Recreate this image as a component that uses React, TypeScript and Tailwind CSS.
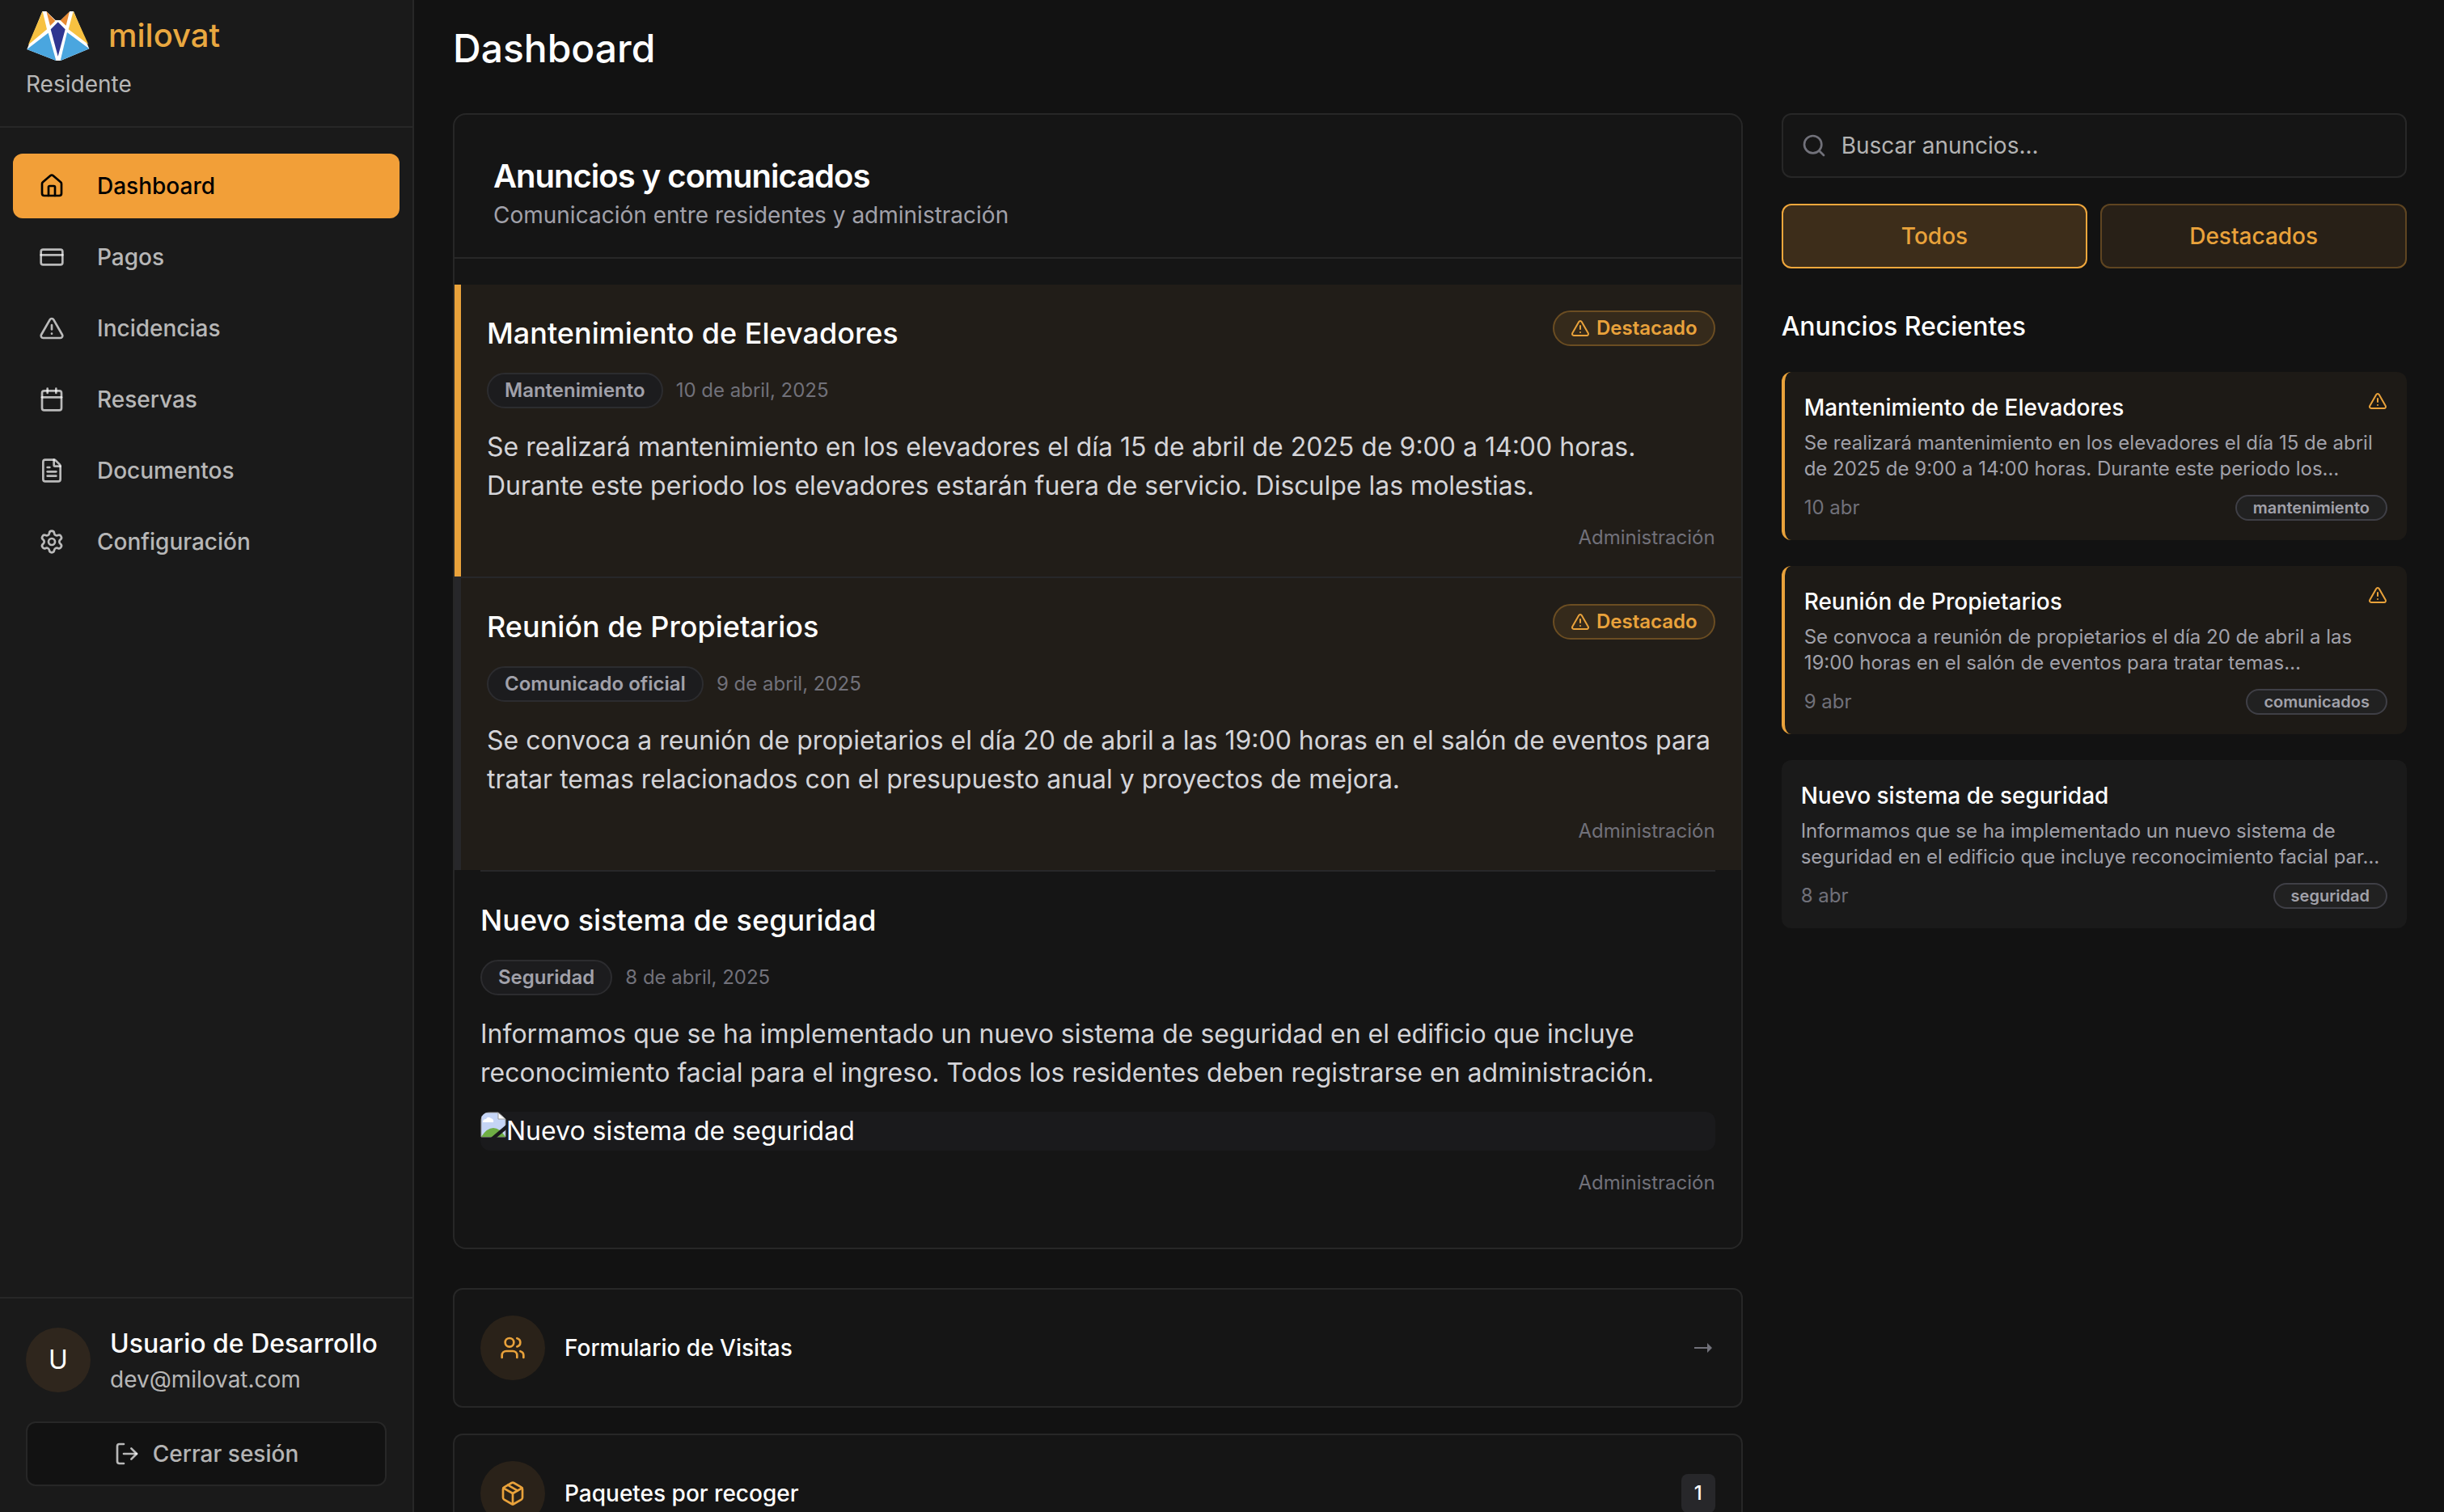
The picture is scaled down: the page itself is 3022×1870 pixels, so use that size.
import {
  Calendar,
  CreditCard,
  FileText,
  House,
  LogOut,
  Package,
  Search,
  Settings,
  TriangleAlert,
  Users,
  type LucideIcon,
} from "lucide-react";
import type { ReactNode } from "react";

type NavItem = { label: string; icon: LucideIcon; active?: boolean };

const navItems: NavItem[] = [
  { label: "Dashboard", icon: House, active: true },
  { label: "Pagos", icon: CreditCard },
  { label: "Incidencias", icon: TriangleAlert },
  { label: "Reservas", icon: Calendar },
  { label: "Documentos", icon: FileText },
  { label: "Configuración", icon: Settings },
];

type Announcement = {
  title: string;
  category: string;
  tag: string;
  date: string;
  shortDate: string;
  body: string;
  excerpt: string;
  featured: boolean;
  imageAlt?: string;
};

const announcements: Announcement[] = [
  {
    title: "Mantenimiento de Elevadores",
    category: "Mantenimiento",
    tag: "mantenimiento",
    date: "10 de abril, 2025",
    shortDate: "10 abr",
    body: "Se realizará mantenimiento en los elevadores el día 15 de abril de 2025 de 9:00 a 14:00 horas. Durante este periodo los elevadores estarán fuera de servicio. Disculpe las molestias.",
    excerpt:
      "Se realizará mantenimiento en los elevadores el día 15 de abril de 2025 de 9:00 a 14:00 horas. Durante este periodo los…",
    featured: true,
  },
  {
    title: "Reunión de Propietarios",
    category: "Comunicado oficial",
    tag: "comunicados",
    date: "9 de abril, 2025",
    shortDate: "9 abr",
    body: "Se convoca a reunión de propietarios el día 20 de abril a las 19:00 horas en el salón de eventos para tratar temas relacionados con el presupuesto anual y proyectos de mejora.",
    excerpt:
      "Se convoca a reunión de propietarios el día 20 de abril a las 19:00 horas en el salón de eventos para tratar temas…",
    featured: true,
  },
  {
    title: "Nuevo sistema de seguridad",
    category: "Seguridad",
    tag: "seguridad",
    date: "8 de abril, 2025",
    shortDate: "8 abr",
    body: "Informamos que se ha implementado un nuevo sistema de seguridad en el edificio que incluye reconocimiento facial para el ingreso. Todos los residentes deben registrarse en administración.",
    excerpt:
      "Informamos que se ha implementado un nuevo sistema de seguridad en el edificio que incluye reconocimiento facial par…",
    featured: false,
    imageAlt: "Nuevo sistema de seguridad",
  },
];

function Logo() {
  return (
    <svg viewBox="0 0 240 240" className="size-20 shrink-0" aria-hidden="true">
      <path d="M61 30 L77 30 L110 62 L129 62 L163 30 L177 30 L235 169 L129 213 L112 213 L4 171 Z" fill="#fff" />
      <path d="M62 30 L8 155 L78 97 Z" fill="#f7c141" />
      <path d="M176 30 L232 153 L158 97 Z" fill="#f7c141" />
      <path d="M76 30 L90 84 L109 65 Z" fill="#e78a33" />
      <path d="M162 30 L128 64 L149 83 Z" fill="#e78a33" />
      <path d="M119 70 L146 97 L119 197 L92 97 Z" fill="#2f3590" />
      <path d="M83 110 L4 171 L112 213 Z" fill="#4aa6df" />
      <path d="M153 108 L235 169 L128 213 Z" fill="#4aa6df" />
      <path d="M77 30 L110 62 L129 62 L162 30 Z" fill="#1a1a1a" />
    </svg>
  );
}

function BrokenImage() {
  return (
    <svg viewBox="0 0 32 32" className="size-8 shrink-0" aria-hidden="true">
      <path d="M1 1 H22 L31 9 V31 H1 Z" fill="#c5d5f6" stroke="#9a9a9a" />
      <path d="M22 1 L31 9 H22 Z" fill="#fff" stroke="#9a9a9a" />
      <path d="M3 13 Q3 9 7 9 Q9 5 13 8 Q17 9 16 13 Z" fill="#fff" />
      <path d="M1 31 Q8 20 16 20 Q24 20 31 31 Z" fill="#6fae45" />
      <path d="M13 32 L32 16 V22 L20 32 Z" fill="#1a1a1c" />
    </svg>
  );
}

function ArrowRight() {
  return (
    <svg viewBox="0 0 28 28" className="size-7 text-[#71717a]" fill="currentColor" aria-hidden="true">
      <path d="M2 13 H18 V8 L24 14 L18 20 V15 H2 Z" />
    </svg>
  );
}

function Sidebar() {
  return (
    <aside className="flex w-128 shrink-0 flex-col border-r-2 border-[#272727] bg-[#1a1a1a]">
      <div className="border-b-2 border-[#272727] px-8 pt-1 pb-8">
        <div className="flex items-center gap-[22px]">
          <Logo />
          <span className="text-[40px] leading-14 font-medium text-[#e9a840]">milovat</span>
        </div>
        <p className="text-[28px] leading-10 text-white/70">Residente</p>
      </div>

      <nav className="flex flex-1 flex-col gap-2 px-4 py-8">
        {navItems.map(({ label, icon: Icon, active }) => (
          <a
            key={label}
            href="#"
            aria-current={active ? "page" : undefined}
            className={
              active
                ? "flex h-20 items-center gap-10 rounded-xl bg-[#f29f38] px-8 text-[28px] font-medium text-black"
                : "flex h-20 items-center gap-10 rounded-xl px-8 text-[28px] font-medium text-white/70"
            }
          >
            <Icon className="size-8" strokeWidth={2} />
            {label}
          </a>
        ))}
      </nav>

      <div className="flex flex-col gap-8 border-t-2 border-[#272727] p-8">
        <div className="flex items-center gap-6">
          <div className="flex size-20 shrink-0 items-center justify-center rounded-full bg-[#2f261d] text-[32px] text-white">
            U
          </div>
          <div className="min-w-0">
            <p className="text-[32px] leading-12 font-medium whitespace-nowrap text-white">Usuario de Desarrollo</p>
            <p className="text-[28px] leading-10 text-white/70">dev@milovat.com</p>
          </div>
        </div>
        <button
          type="button"
          className="flex h-20 items-center justify-center gap-4 rounded-xl border-2 border-[#272727] bg-[#121212] text-[28px] font-medium text-white/70"
        >
          <LogOut className="size-8" strokeWidth={2} />
          Cerrar sesión
        </button>
      </div>
    </aside>
  );
}

function AnnouncementItem({ item, first }: { item: Announcement; first: boolean }) {
  const frame = item.featured
    ? first
      ? "border-l-8 border-l-[#e9a23b] bg-[#211d18] px-8"
      : "border-t-2 border-l-8 border-[#27272a] bg-[#211d18] px-8"
    : "mx-8 border-t-2 border-[#27272a]";
  return (
    <article className={frame}>
      <div className="flex flex-col py-8">
        <div className="flex items-start justify-between">
          <h3 className="text-[36px] leading-14 font-medium text-white">{item.title}</h3>
          {item.featured && (
            <span className="flex h-11 items-center gap-2 rounded-full border-2 border-[#6b4d22] bg-[#352a1b] px-5 text-2xl font-semibold text-[#e9a23b]">
              <TriangleAlert className="size-6" strokeWidth={2} />
              Destacado
            </span>
          )}
        </div>
        <div className="mt-[21px] flex items-center gap-4">
          <span className="flex h-11 items-center rounded-full border-2 border-[#2c2c2f] bg-[#1c1c1e] px-5 text-2xl font-semibold text-[#a1a1aa]">
            {item.category}
          </span>
          <span className="text-2xl text-[#71717a]">{item.date}</span>
        </div>
        <p className="mt-6 text-[32px] leading-12 text-[#d4d4d8]">{item.body}</p>
        {item.imageAlt && (
          <div
            role="img"
            aria-label={item.imageAlt}
            className="mt-6 flex items-start overflow-hidden rounded-xl bg-[#1a1a1c] text-[32px] leading-12 text-white"
          >
            <BrokenImage />
            {item.imageAlt}
          </div>
        )}
        <p className="mt-6 text-right text-2xl leading-8 text-[#71717a]">Administración</p>
      </div>
    </article>
  );
}

function QuickLink({ icon: Icon, label, children }: { icon: LucideIcon; label: string; children: ReactNode }) {
  return (
    <a
      href="#"
      className="flex items-center justify-between rounded-xl border-2 border-[#272727] bg-[#151515] p-8"
    >
      <span className="flex items-center gap-6">
        <span className="flex size-20 items-center justify-center rounded-full bg-[#2a2219] text-[#e9a23b]">
          <Icon className="size-8" strokeWidth={2} />
        </span>
        <span className="text-[28px] font-medium text-white">{label}</span>
      </span>
      {children}
    </a>
  );
}

function RecentCard({ item }: { item: Announcement }) {
  return (
    <article
      className={
        item.featured
          ? "rounded-xl border-l-4 border-[#e9a23b] bg-[#1d1a16] p-6"
          : "rounded-xl bg-[#1a1a1a] p-6"
      }
    >
      <div className="flex items-start justify-between">
        <h4 className="text-[28px] leading-10 font-medium text-white">{item.title}</h4>
        {item.featured && <TriangleAlert className="size-6 text-[#e9a23b]" strokeWidth={2} />}
      </div>
      <p className="mt-2 text-2xl leading-8 text-[#a1a1aa]">{item.excerpt}</p>
      <div className="mt-4 flex items-center justify-between">
        <span className="text-2xl leading-8 text-[#71717a]">{item.shortDate}</span>
        <span className="flex h-8 items-center rounded-full border-2 border-[#3f3f46] bg-[#212121] px-5 text-xl font-semibold text-[#a1a1aa]">
          {item.tag}
        </span>
      </div>
    </article>
  );
}

export default function App() {
  return (
    <div className="flex h-screen bg-[#121212] font-['Inter',sans-serif] text-white">
      <Sidebar />
      <main className="min-w-0 flex-1 overflow-y-auto pt-7 pr-[46px] pb-12 pl-12 [scrollbar-width:none]">
        <h1 className="mb-12 text-5xl leading-16 font-medium">Dashboard</h1>
        <div className="grid grid-cols-3 gap-12">
          <div className="col-span-2 flex flex-col gap-12">
            <section className="rounded-2xl border-2 border-[#272727] bg-[#151515]">
              <header className="border-b-2 border-[#272727] px-12 pt-12 pb-8">
                <h2 className="text-[40px] leading-14 font-semibold tracking-tight">Anuncios y comunicados</h2>
                <p className="text-[28px] leading-10 text-[#a1a1aa]">
                  Comunicación entre residentes y administración
                </p>
              </header>
              <div className="py-8">
                {announcements.map((item, index) => (
                  <AnnouncementItem key={item.title} item={item} first={index === 0} />
                ))}
              </div>
            </section>

            <div className="flex flex-col gap-8">
              <QuickLink icon={Users} label="Formulario de Visitas">
                <ArrowRight />
              </QuickLink>
              <QuickLink icon={Package} label="Paquetes por recoger">
                <span className="flex h-12 items-center rounded-lg bg-[#27272a] px-4 text-2xl font-medium">1</span>
              </QuickLink>
            </div>
          </div>

          <div className="flex flex-col">
            <div className="relative">
              <Search
                className="absolute top-6 left-6 size-8 text-[#71717a]"
                strokeWidth={2}
                aria-hidden="true"
              />
              <input
                type="search"
                aria-label="Buscar anuncios"
                placeholder="Buscar anuncios..."
                className="h-20 w-full rounded-xl border-2 border-[#272727] bg-[#151515] pr-6 pl-18 text-[28px] text-white placeholder:text-[#b3b3b3]"
              />
            </div>
            <div className="mt-8 grid grid-cols-2 gap-4">
              <button
                type="button"
                className="h-20 rounded-xl border-2 border-[#f0a73c] bg-[#3d2d1a] text-[28px] font-medium text-[#e9a23b]"
              >
                Todos
              </button>
              <button
                type="button"
                className="h-20 rounded-xl border-2 border-[#5f4521] bg-[#282017] text-[28px] font-medium text-[#e9a23b]"
              >
                Destacados
              </button>
            </div>
            <h2 className="mt-12 text-[32px] leading-12 font-medium">Anuncios Recientes</h2>
            <div className="mt-8 flex flex-col gap-8">
              {announcements.map((item) => (
                <RecentCard key={item.title} item={item} />
              ))}
            </div>
          </div>
        </div>
      </main>
    </div>
  );
}
